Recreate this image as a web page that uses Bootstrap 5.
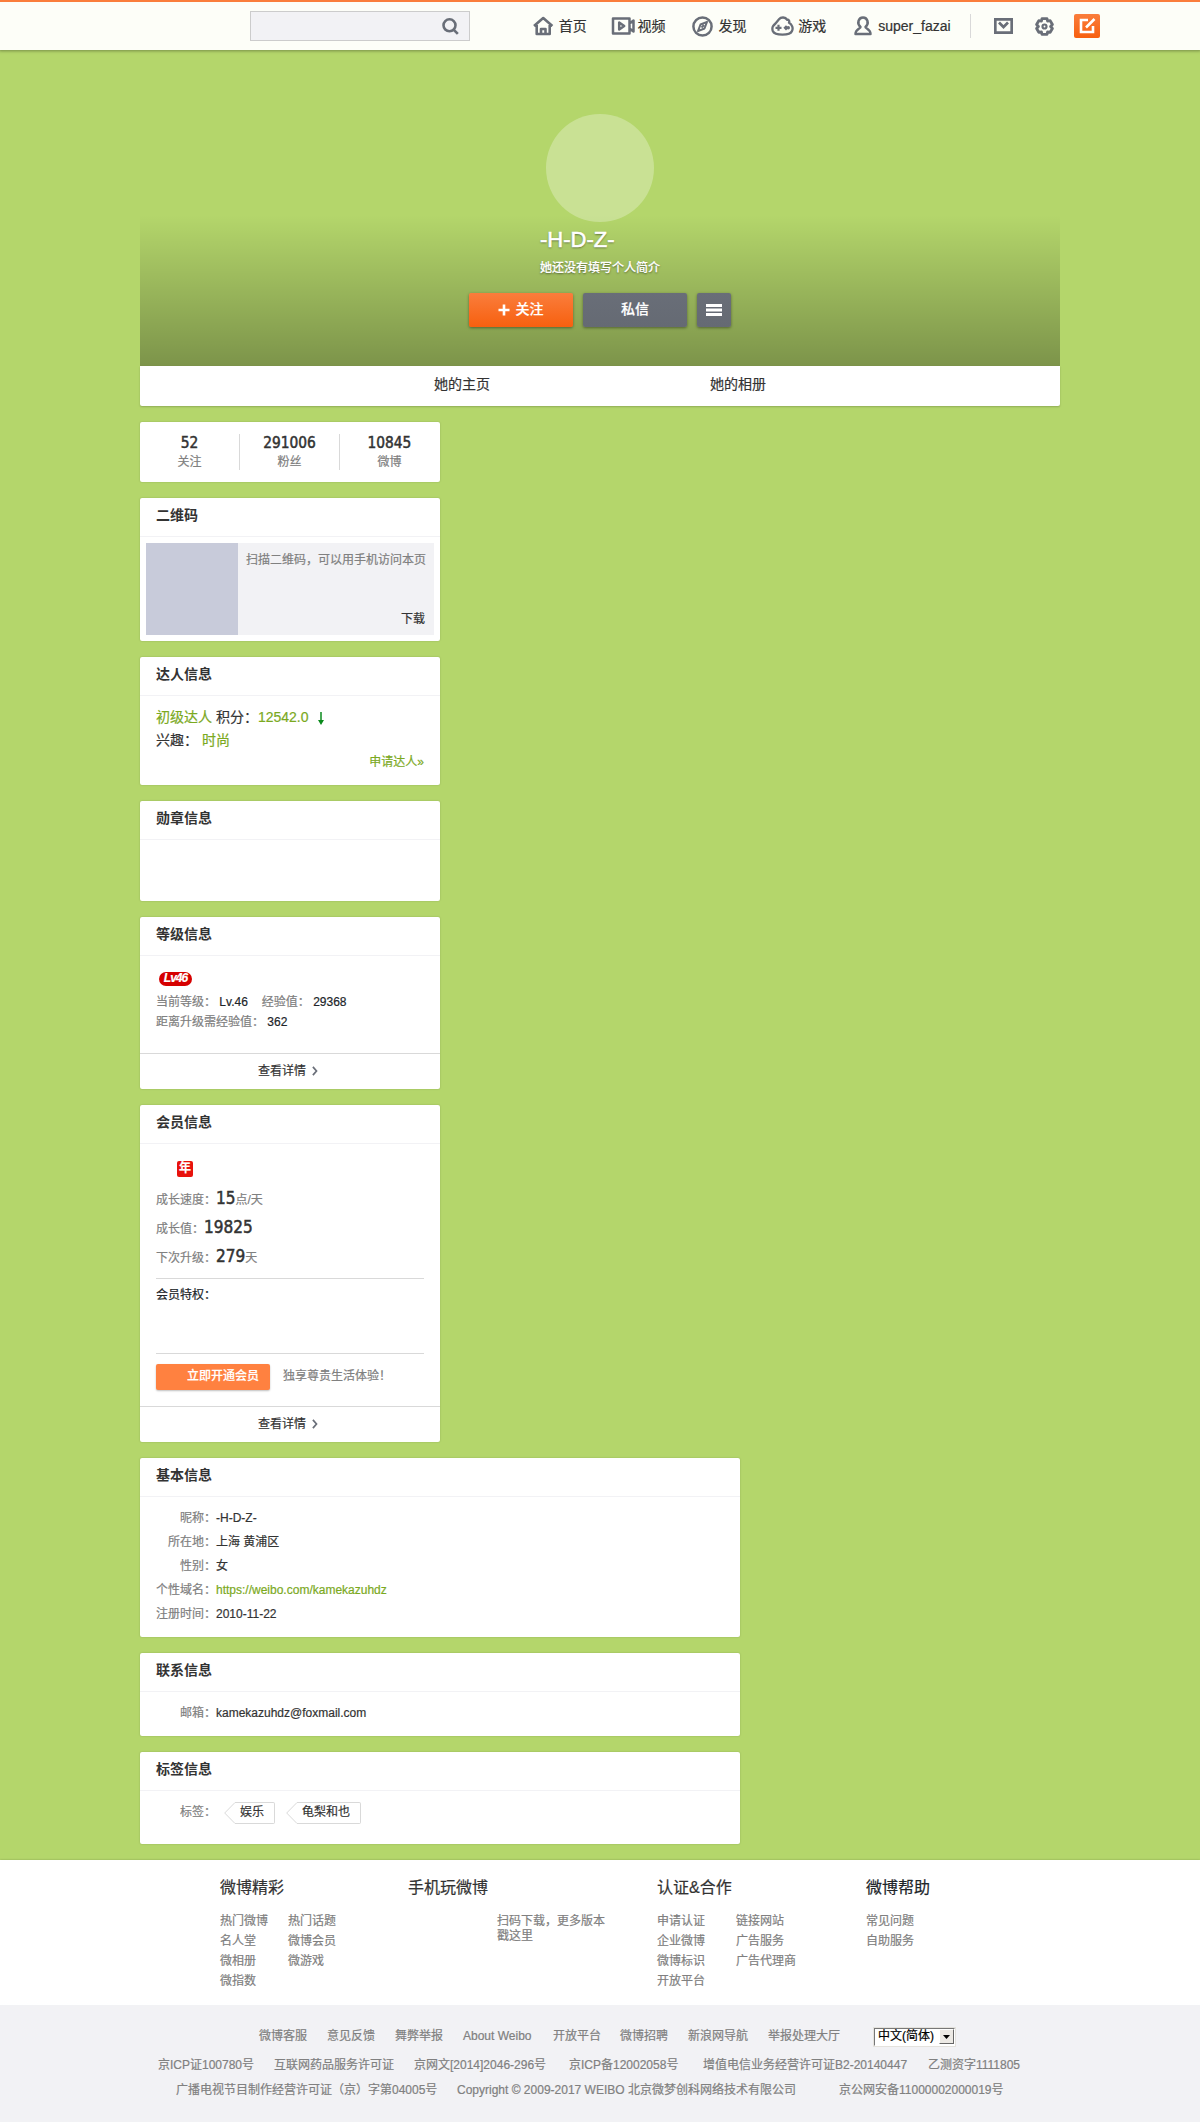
<!DOCTYPE html>
<html lang="zh-CN">
<head>
<meta charset="utf-8">
<meta name="viewport" content="width=device-width, initial-scale=1">
<title>-H-D-Z- 的微博</title>
<link href="https://cdn.jsdelivr.net/npm/bootstrap@5.3.0/dist/css/bootstrap.min.css" rel="stylesheet">
<style>
:root{--ink:#333;--soft:#808080;--leaf:#7ba91e;--line:#d9d9d9;--icon:#696e78}
body{background:#b4d66b;color:var(--ink);font:12px/20px "Liberation Sans","Noto Sans CJK SC",sans-serif;width:1200px;-webkit-text-stroke:.2px}
a{color:inherit;text-decoration:none}
.soft{color:var(--soft)} .leaf{color:var(--leaf)} .fs14{font-size:14px}
.digits{font-family:"DejaVu Sans Condensed","Noto Sans",sans-serif;font-weight:400;-webkit-text-stroke:.5px;letter-spacing:0;color:var(--ink)}
/* top bar */
.topbar{height:50px;padding:0 100px 0 250px;border-top:2px solid #fa7d3c;background:#fdfef8;box-shadow:0 0 3px 1px rgba(0,0,0,.35);position:relative;z-index:2}
.finder{width:220px;height:30px;background:#f2f2f5;border:1px solid #ccc;margin:2px 63px 2px 0;padding-right:10px}
.menu-link{height:46px;color:var(--ink);font-size:14px;white-space:nowrap;margin-bottom:1px}
.menu-link svg,.topbar svg{flex:none}
.menu-link svg{margin-top:1px}
.m1{width:78px}.m2{width:81px}.m3{width:79px}.m4{width:83px}.m5{width:117px}
.split{width:1px;height:24px;background:#d9d9d9;margin:3px 23px 3px 0}
.compose{width:26px;height:24px;border-radius:2px;background:linear-gradient(#fa7d3c,#f7600f);margin-left:20px}
.i svg{fill:none;stroke:var(--icon)}
/* cover */
.page{width:920px;margin:0 auto}
.cover{height:316px;padding-top:64px;background:linear-gradient(rgba(0,0,0,0) 165px,rgba(0,0,0,.31))}
.face{width:108px;height:108px;border-radius:50%;background:rgba(255,255,255,.28)}
.who{width:120px;color:#fff;text-shadow:0 1px 2px rgba(0,0,0,.5);white-space:nowrap;margin-top:5px}
.who-name{font-size:22px;line-height:28px;margin-top:-1px;-webkit-text-stroke:.6px}
.who-bio{line-height:20px;margin-top:4px;font-weight:500}
.act{width:104px;height:34px;border-radius:2px;color:#fff;font-size:14px;font-weight:500;box-shadow:0 1px 3px rgba(0,0,0,.4);padding:0 0 3px}
.act-go{background:linear-gradient(#fa7d3c,#f7600f)}
.act-gray{background:linear-gradient(#696e78,#656a73)}
.act-more{width:34px;padding:0}
.tabs{height:40px;background:#fff;font-size:14px;box-shadow:0 1px 2px rgba(0,0,0,.2);padding:0 184px 4px;border-radius:0 0 2px 2px}
.tabs a{width:276px;text-align:center}
/* panels */
.panel{width:300px;margin-top:16px;background:#fff;border-radius:2px;box-shadow:0 0 2px rgba(0,0,0,.2)}
.panel-wide{width:600px}
.panel h2{font-size:14px;font-weight:700;height:39px;line-height:35px;margin:0;padding-left:16px;border-bottom:1px solid #f2f2f5;-webkit-text-stroke:0}
.panel-in{padding:0 16px}
.more{height:36px;border-top:1px solid var(--line);color:var(--ink);padding:0 4px 1px 0}
.stat{width:100px;height:36px;border-right:1px solid var(--line);text-align:center}
.stat:last-child{border-color:transparent}
.stat b{display:block;font-size:15.3px;line-height:18px}
.stat span{display:block;line-height:18px;margin-top:1px}
.qr{margin:6px;height:92px;background:#f2f2f5}
.qr-code{width:92px;background:#c8cbda}
.lv{width:33px;height:14px;border-radius:7px;background:#d60000;color:#fff;font:italic bold 12px/12px "Liberation Sans",sans-serif;letter-spacing:-1px;text-align:center;margin:16px 0 6px 3px}
.year{width:16px;height:16px;border-radius:2px;background:#e8120c;color:#fff;font-weight:700;line-height:14px;text-align:center;margin:17px 0 7px 21px}
.grow{height:29px;line-height:29px}
.grow b{font-size:17px}
.rule{border-top:1px solid var(--line)}
.vip{width:114px;height:26px;border-radius:2px;background:#ff8140;color:#fff;font-weight:500;line-height:24px;padding-left:31px;box-shadow:0 1px 2px rgba(0,0,0,.25)}
.info{height:24px;line-height:24px;white-space:nowrap}
.info span{width:60px;text-align:right}
.tag-item svg{display:block}
.tag-item b{font-weight:400;border:1px solid var(--line);border-left:0;border-radius:0 2px 2px 0;height:22px;line-height:18px;padding:0 10px 0 5px}
/* footer */
.foot{height:145px;background:#fff;margin-top:16px;padding:18px 0 0 220px;box-shadow:0 0 2px rgba(0,0,0,.25)}
.foot h3{font-size:16px;font-weight:400;line-height:20px;margin:0 0 13px}
.foot a{display:block;line-height:20px}
.f1{width:188px}.f2{width:249px}.f3{width:209px}.c1{width:68px}.c2{width:79px}
.foot .app{line-height:15px;margin:16px 0 0 89px;width:112px}
.legal{height:117px;background:#f2f2f5;white-space:nowrap}
.legal .rowline{display:grid;height:20px}
.r1{padding:21px 0 0 259px;height:41px!important;grid-template-columns:68px 68px 68px 90px 67px 68px 80px 105px 83px}
.r2{margin-top:9px;padding-left:158px;grid-template-columns:116px 140px 155px 134px 225px 100px}
.r3{margin-top:5px;padding-left:176px;grid-template-columns:281px 382px 180px}
.lang{height:20px;margin-top:1px;background:#fff;border:2px solid;border-color:#777 #fff #fff #777;color:#000;line-height:15px;padding-left:3px;outline:1px solid #e4e2dd;outline-offset:-1px}
.lang i{width:15px;height:15px;background:#ece9e4;border:1px solid;border-color:#fff #666 #666 #fff}
</style>
</head>
<body>
<header class="topbar d-flex align-items-center i">
  <div class="finder d-flex align-items-center justify-content-end"><svg width="17" height="17" viewBox="0 0 17 17" stroke-width="2.6"><circle cx="7.5" cy="7.3" r="6"/><path d="M11.8 11.8l4 4"/></svg></div>
  <a class="menu-link m1 d-flex align-items-center" href="#"><svg class="me-1" width="22" height="20" viewBox="0 0 22 20" stroke-width="2.6"><path d="M1 10 10.200 2 19.400 10M3.700 9v9h13V9M8 17v-4h4.500v4" stroke-linejoin="round"/></svg>首页</a>
  <a class="menu-link m2 d-flex align-items-center" href="#"><svg style="margin-right:3px" width="24" height="18" viewBox="0 0 24 18" stroke-width="2.5"><path d="M2 1.600h16.500v14.800H2zM18.500 6.500 22.500 3.500v11l-4-3M8.200 5.500v7l5-3.500z" stroke-linejoin="round"/></svg>视频</a>
  <a class="menu-link m3 d-flex align-items-center" href="#"><svg style="margin:1px 5px 0 1px" width="21" height="21" viewBox="0 0 21 21" stroke-width="2.500"><circle cx="10.500" cy="10.500" r="9.100"/><path d="M15 5.800 12.500 12.500 6 15.200 8.500 8.500zM9.500 11.500l2.500-2.500" stroke-width="2" stroke-linejoin="round"/></svg>发现</a>
  <a class="menu-link m4 d-flex align-items-center" href="#"><svg style="margin:1px 4px 0 1px" width="23" height="20" viewBox="0 0 23 20" stroke-width="2.300"><path d="M8 3.300C10 .8 14.500.8 16 3.800c2-.3 2.700 1.200 2 2.900 3 1.600 4.500 5.300 3 8.300-1.200 3-4.500 3.600-9.500 3.600S3 18 1.800 15C.5 11.500 2.500 9 4.500 7.500z" stroke-linejoin="round"/><path d="M4.500 11.800h6M7.500 8.800v6" stroke-width="2.200"/><path d="M15 9.200l2.600 2.600L15 14.400l-2.600-2.600z" fill="#696e78" stroke="none"/><circle cx="17.300" cy="11.800" r="1.700" fill="#696e78" stroke="none"/></svg>游戏</a>
  <a class="menu-link m5 d-flex align-items-center" href="#"><svg style="margin:1px 6px 0 1px" width="18" height="20" viewBox="0 0 18 20" stroke-width="2.500"><path d="M6.500 11C2.500 7.500 4.500 1.500 9 1.500s6.500 6 2.500 9.500c0 1.500 5 2 5 7h-15c0-5 5-5.500 5-7z" stroke-linejoin="round"/></svg>super_fazai</a>
  <span class="split"></span>
  <svg width="19" height="16" viewBox="0 0 19 16" stroke-width="2.700"><path d="M1.300 1.300h16.400v13.400H1.300zM5 4.500l4.500 4.500L14 4.500"/></svg>
  <svg style="margin-left:22px" width="19" height="19" viewBox="0 0 19 19" stroke-width="2.800"><path d="M7 1.700h5l.6 2.500 2.600-.5 2.200 3.800-1.800 2 1.800 2-2.200 3.800-2.600-.500-.600 2.500H7L6.400 14.800l-2.600.500-2.200-3.800 1.800-2-1.800-2 2.200-3.800L6.400 4.200z" stroke-linejoin="round"/><circle cx="9.500" cy="9.500" r="2" stroke-width="2.200"/></svg>
  <a class="compose d-flex align-items-center justify-content-center" href="#"><svg width="17" height="16" viewBox="0 0 17 16" style="stroke:#fff" stroke-width="2.600"><path d="M9 2H2v12h12V8M7 9.500 15.500 1"/></svg></a>
</header>

<main class="page">
  <section class="cover d-flex flex-column align-items-center">
    <div class="face"></div>
    <div class="who"><div class="who-name">-H-D-Z-</div><div class="who-bio">她还没有填写个人简介</div></div>
    <div class="d-flex" style="gap:10px;margin-top:15px">
      <a class="act act-go d-flex align-items-center justify-content-center" href="#"><svg class="me-1" style="margin-top:3px" width="12" height="12"><path d="M6 .5v11M.5 6h11" stroke="#fff" stroke-width="2.600"/></svg>&#8202;关注</a>
      <a class="act act-gray d-flex align-items-center justify-content-center" href="#">私信</a>
      <a class="act act-gray act-more d-flex align-items-center justify-content-center" href="#"><svg width="16" height="12"><path d="M0 1.500h16M0 6h16M0 10.500h16" stroke="#fff" stroke-width="3"/></svg></a>
    </div>
  </section>
  <nav class="tabs d-flex align-items-center"><a href="#">她的主页</a><a href="#">她的相册</a></nav>

  <section class="panel d-flex align-items-center" style="height:60px">
    <div class="stat"><b class="digits">52</b><span class="soft">关注</span></div>
    <div class="stat"><b class="digits">291006</b><span class="soft">粉丝</span></div>
    <div class="stat"><b class="digits">10845</b><span class="soft">微博</span></div>
  </section>

  <section class="panel" style="height:143px">
    <h2>二维码</h2>
    <div class="qr d-flex">
      <div class="qr-code"></div>
      <div class="d-flex flex-column justify-content-between flex-fill" style="padding:7px 7px 6px 8px"><span class="soft text-nowrap">扫描二维码，可以用手机访问本页</span><a class="text-end" style="padding-right:2px" href="#">下载</a></div>
    </div>
  </section>

  <section class="panel" style="height:128px">
    <h2>达人信息</h2>
    <div class="panel-in" style="padding-top:10px">
      <div class="fs14 d-flex" style="line-height:23px"><span class="leaf">初级达人</span>&nbsp;积分：<span class="leaf">12542.0</span><svg style="margin:6px 0 0 9px" width="6" height="13"><path d="M3 0v10" stroke="#0a8a1c" stroke-width="1.500"/><path d="M0 8h6L3 13z" fill="#0a8a1c"/></svg></div>
      <div class="fs14" style="line-height:23px">兴趣： <span class="leaf">时尚</span></div>
      <a class="leaf d-block text-end" href="#">申请达人»</a>
    </div>
  </section>

  <section class="panel" style="height:100px"><h2>勋章信息</h2></section>

  <section class="panel d-flex flex-column" style="height:172px">
    <h2>等级信息</h2>
    <div class="panel-in flex-fill soft overflow-hidden">
      <div class="lv">Lv46</div>
      <div>当前等级： <span class="text-body">Lv.46</span><span style="margin-left:14px">经验值：</span> <span class="text-body">29368</span></div>
      <div>距离升级需经验值： <span class="text-body">362</span></div>
    </div>
    <a class="more d-flex align-items-center justify-content-center" href="#">查看详情<svg style="margin-left:6px" width="6" height="10"><path d="M.9.900 4.500 5 .900 9.100" fill="none" stroke="#696e78" stroke-width="1.700"/></svg></a>
  </section>

  <section class="panel d-flex flex-column" style="height:337px">
    <h2>会员信息</h2>
    <div class="panel-in flex-fill soft">
      <div class="year">年</div>
      <div class="grow">成长速度：<b class="digits">15</b>点/天</div>
      <div class="grow">成长值：<b class="digits">19825</b></div>
      <div class="grow">下次升级：<b class="digits">279</b>天</div>
      <div class="rule text-body" style="margin-top:7px;height:75px;padding-top:6px">会员特权：</div>
      <div class="rule d-flex" style="padding-top:10px"><a class="vip" href="#">立即开通会员</a><span style="margin-left:13px;line-height:24px">独享尊贵生活体验！</span></div>
    </div>
    <a class="more d-flex align-items-center justify-content-center" href="#">查看详情<svg style="margin-left:6px" width="6" height="10"><path d="M.9.900 4.500 5 .900 9.100" fill="none" stroke="#696e78" stroke-width="1.700"/></svg></a>
  </section>

  <section class="panel panel-wide" style="height:179px">
    <h2>基本信息</h2>
    <div class="panel-in" style="padding-top:9px">
      <div class="info d-flex"><span class="soft">昵称：</span>-H-D-Z-</div>
      <div class="info d-flex"><span class="soft">所在地：</span>上海 黄浦区</div>
      <div class="info d-flex"><span class="soft">性别：</span>女</div>
      <div class="info d-flex"><span class="soft">个性域名：</span><a class="leaf" href="#">https://weibo.com/kamekazuhdz</a></div>
      <div class="info d-flex"><span class="soft">注册时间：</span>2010-11-22</div>
    </div>
  </section>

  <section class="panel panel-wide" style="height:83px">
    <h2>联系信息</h2>
    <div class="panel-in" style="padding-top:9px"><div class="info d-flex"><span class="soft">邮箱：</span>kamekazuhdz@foxmail.com</div></div>
  </section>

  <section class="panel panel-wide" style="height:92px">
    <h2>标签信息</h2>
    <div class="panel-in" style="padding-top:9px">
      <div class="info d-flex"><span class="soft">标签：</span>
        <a class="tag-item d-flex" style="margin:2px 11px 0 8px" href="#"><svg width="11" height="22"><path d="M11 .5 .700 11 11 21.500" fill="none" stroke="#d9d9d9"/></svg><b>娱乐</b></a>
        <a class="tag-item d-flex" style="margin-top:2px" href="#"><svg width="11" height="22"><path d="M11 .5 .700 11 11 21.500" fill="none" stroke="#d9d9d9"/></svg><b>龟梨和也</b></a>
      </div>
    </div>
  </section>
</main>

<footer>
  <div class="foot d-flex">
    <div class="f1"><h3>微博精彩</h3><div class="d-flex soft"><div class="c1"><a href="#">热门微博</a><a href="#">名人堂</a><a href="#">微相册</a><a href="#">微指数</a></div><div><a href="#">热门话题</a><a href="#">微博会员</a><a href="#">微游戏</a></div></div></div>
    <div class="f2"><h3>手机玩微博</h3><div class="app soft">扫码下载，更多版本<br>戳这里</div></div>
    <div class="f3"><h3>认证&amp;合作</h3><div class="d-flex soft"><div class="c2"><a href="#">申请认证</a><a href="#">企业微博</a><a href="#">微博标识</a><a href="#">开放平台</a></div><div><a href="#">链接网站</a><a href="#">广告服务</a><a href="#">广告代理商</a></div></div></div>
    <div class="soft"><h3 class="text-body">微博帮助</h3><a href="#">常见问题</a><a href="#">自助服务</a></div>
  </div>
  <div class="legal soft">
    <div class="rowline r1"><a href="#">微博客服</a><a href="#">意见反馈</a><a href="#">舞弊举报</a><a href="#">About Weibo</a><a href="#">开放平台</a><a href="#">微博招聘</a><a href="#">新浪网导航</a><a href="#">举报处理大厅</a><div class="lang d-flex justify-content-between">中文(简体)<i class="d-flex align-items-center justify-content-center"><svg width="7" height="4"><path d="M0 0h7L3.500 4z" fill="#000"/></svg></i></div></div>
    <div class="rowline r2"><span>京ICP证100780号</span><span>互联网药品服务许可证</span><span>京网文[2014]2046-296号</span><span>京ICP备12002058号</span><span>增值电信业务经营许可证B2-20140447</span><span>乙测资字1111805</span></div>
    <div class="rowline r3"><span>广播电视节目制作经营许可证（京）字第04005号</span><span>Copyright © 2009-2017 WEIBO 北京微梦创科网络技术有限公司</span><span>京公网安备11000002000019号</span></div>
  </div>
</footer>
<script src="https://cdn.jsdelivr.net/npm/bootstrap@5.3.0/dist/js/bootstrap.bundle.min.js"></script>
</body>
</html>
